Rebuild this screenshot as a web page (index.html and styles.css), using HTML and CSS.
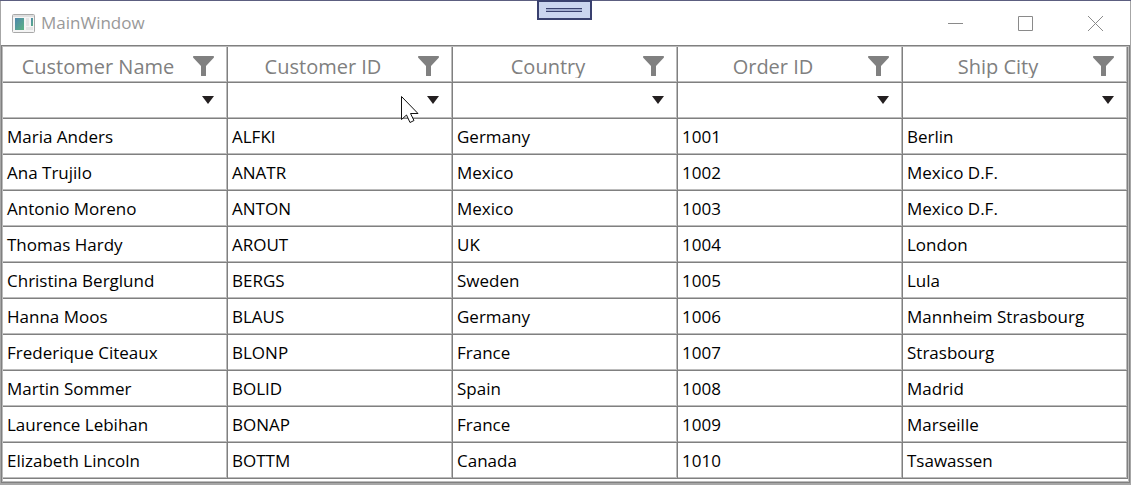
FILE: index.html
```html
<!DOCTYPE html>
<html lang="en">
<head>
<meta charset="utf-8">
<title>MainWindow</title>
<link rel="stylesheet" href="styles.css">
</head>
<body>
<svg class="symbols" aria-hidden="true">
  <symbol id="funnel" viewBox="0 0 21 20"><path d="M.5 0H20.500Q21.500 1 20.500 2L13 10V19.500Q13 20 12.500 20H8.500Q8 20 8 19.500V10L.5 2Q-.5 1 .5 0Z" fill="#808080"/></symbol>
  <symbol id="arrow" viewBox="0 0 12 8"><path d="M0 0H12L6 8Z" fill="#231f20"/></symbol>
</svg>
<div class="window">
  <header class="titlebar">
    <svg class="app-icon" width="23" height="19" viewBox="0 0 23 19">
      <defs><linearGradient id="tile" x1="0" y1="0" x2="1" y2="1"><stop offset="0" stop-color="#4d86ad"/><stop offset="1" stop-color="#5db382"/></linearGradient></defs>
      <rect x=".5" y=".5" width="22" height="18" rx="1" fill="#f5f5f5" stroke="#a8a8a8"/>
      <path d="M1 1H22V3H1Z" fill="#dedede"/>
      <rect x="3" y="4" width="9" height="12" fill="url(#tile)"/>
      <rect x="14" y="4" width="3" height="8" fill="#e4e4e4"/>
      <rect x="19" y="4" width="2" height="8" fill="url(#tile)"/>
      <rect x="14" y="13" width="7" height="3" fill="#e4e4e4"/>
    </svg>
    <h1 class="title">MainWindow</h1>
    <button class="caption" aria-label="Minimize"><svg width="15" height="15" viewBox="0 0 15 15"><path d="M0 7.500H15"/></svg></button>
    <button class="caption" aria-label="Maximize"><svg width="15" height="15" viewBox="0 0 15 15"><path d="M.5 .5H14.500V14.500H.5Z"/></svg></button>
    <button class="caption" aria-label="Close"><svg width="15" height="15" viewBox="0 0 15 15"><path d="M0 0L15 15M15 0L0 15"/></svg></button>
  </header>
  <main class="frame">
    <table class="grid">
      <thead>
        <tr class="heads">
          <th scope="col"><div class="head"><span class="label">Customer Name</span><button class="filter" aria-label="Filter Customer Name"><svg width="21" height="20"><use href="#funnel"/></svg></button></div></th>
          <th scope="col"><div class="head"><span class="label">Customer ID</span><button class="filter" aria-label="Filter Customer ID"><svg width="21" height="20"><use href="#funnel"/></svg></button></div></th>
          <th scope="col"><div class="head"><span class="label">Country</span><button class="filter" aria-label="Filter Country"><svg width="21" height="20"><use href="#funnel"/></svg></button></div></th>
          <th scope="col"><div class="head"><span class="label">Order ID</span><button class="filter" aria-label="Filter Order ID"><svg width="21" height="20"><use href="#funnel"/></svg></button></div></th>
          <th scope="col"><div class="head"><span class="label">Ship City</span><button class="filter" aria-label="Filter Ship City"><svg width="21" height="20"><use href="#funnel"/></svg></button></div></th>
        </tr>
        <tr class="filters">
          <td><div class="combo"><select aria-label="Customer Name value"><option></option></select><svg width="12" height="8"><use href="#arrow"/></svg></div></td>
          <td><div class="combo"><select aria-label="Customer ID value"><option></option></select><svg width="12" height="8"><use href="#arrow"/></svg></div></td>
          <td><div class="combo"><select aria-label="Country value"><option></option></select><svg width="12" height="8"><use href="#arrow"/></svg></div></td>
          <td><div class="combo"><select aria-label="Order ID value"><option></option></select><svg width="12" height="8"><use href="#arrow"/></svg></div></td>
          <td><div class="combo"><select aria-label="Ship City value"><option></option></select><svg width="12" height="8"><use href="#arrow"/></svg></div></td>
        </tr>
      </thead>
      <tbody>
        <tr><td>Maria Anders</td><td>ALFKI</td><td>Germany</td><td>1001</td><td>Berlin</td></tr>
        <tr><td>Ana Trujilo</td><td>ANATR</td><td>Mexico</td><td>1002</td><td>Mexico D.F.</td></tr>
        <tr><td>Antonio Moreno</td><td>ANTON</td><td>Mexico</td><td>1003</td><td>Mexico D.F.</td></tr>
        <tr><td>Thomas Hardy</td><td>AROUT</td><td>UK</td><td>1004</td><td>London</td></tr>
        <tr><td>Christina Berglund</td><td>BERGS</td><td>Sweden</td><td>1005</td><td>Lula</td></tr>
        <tr><td>Hanna Moos</td><td>BLAUS</td><td>Germany</td><td>1006</td><td>Mannheim Strasbourg</td></tr>
        <tr><td>Frederique Citeaux</td><td>BLONP</td><td>France</td><td>1007</td><td>Strasbourg</td></tr>
        <tr><td>Martin Sommer</td><td>BOLID</td><td>Spain</td><td>1008</td><td>Madrid</td></tr>
        <tr><td>Laurence Lebihan</td><td>BONAP</td><td>France</td><td>1009</td><td>Marseille</td></tr>
        <tr><td>Elizabeth Lincoln</td><td>BOTTM</td><td>Canada</td><td>1010</td><td>Tsawassen</td></tr>
      </tbody>
    </table>
  </main>
  <button class="debug-tab" aria-label="Show toolbar"><svg width="36" height="5" viewBox="0 0 36 5"><path d="M0 1H36V4H0Z" fill="#a3add0"/><path d="M0 .5H36M0 3.500H36" stroke="#39406f"/></svg></button>
  <svg class="pointer" width="18" height="28" viewBox="0 0 18 28"><path d="M.5 .5V23.500L5.500 19L9 26.500L13 24.500L9.500 17.500H17Z" fill="#fff" stroke="#111"/></svg>
</div>
</body>
</html>
```
FILE: styles.css
```css
* { box-sizing: border-box; }
body {
  margin: 0;
  background: #a6a6a6;
  font-family: "Open Sans", "Noto Sans", sans-serif;
  color: #000;
}
button, select {
  appearance: none;
  margin: 0;
  padding: 0;
  border: 0;
  background: none;
  font: inherit;
}
svg { display: block; }
.symbols { position: absolute; width: 0; height: 0; }
.window {
  position: relative;
  border-top: 1px solid #5c5e80;
}
.titlebar {
  display: flex;
  align-items: center;
  height: 44px;
  margin: 0 1px;
  padding-left: 11px;
  background: #fff;
}
.title {
  flex: 1;
  margin: 0 0 0 6px;
  font-size: 17px;
  line-height: 24px;
  font-weight: 400;
  color: #999;
}
.caption {
  display: flex;
  align-items: center;
  justify-content: center;
  width: 70px;
  height: 44px;
}
.caption path { fill: none; stroke: #8a8a8a; }
.frame {
  margin: 0 1px;
  padding-bottom: 3px;
  border: 1px solid #808080;
  outline: 1px solid #bcbcbc;
  outline-offset: -2px;
  background: #fff;
}
.grid {
  width: 100%;
  padding: 1px 1px 0;
  border-spacing: 0;
  table-layout: fixed;
}
.grid th, .grid td {
  height: 36px;
  padding: 0 0 0 4px;
  border-right: 1px solid #808080;
  border-bottom: 1px solid #808080;
  box-shadow: inset -1px -1px #bcbcbc;
  font-weight: 400;
  font-size: 17px;
  line-height: 24px;
  text-align: left;
}
.grid .heads th, .grid .filters td { padding: 0; }
.head {
  display: flex;
  align-items: center;
  padding-right: 13px;
}
.label {
  flex: 1;
  padding-top: 4px;
  overflow: hidden;
  font-size: 20px;
  line-height: 22px;
  text-align: center;
  color: #808080;
}
.filter { margin-top: 3px; }
.combo { position: relative; }
.combo select {
  display: block;
  width: 100%;
  height: 34px;
}
.combo svg {
  position: absolute;
  top: 12px;
  right: 13px;
  pointer-events: none;
}
.debug-tab {
  position: absolute;
  top: -1px;
  left: calc(50% - 29px);
  display: flex;
  align-items: center;
  justify-content: center;
  width: 55px;
  height: 20px;
  border: 2px solid #39406f;
  background: #cbd5f0;
}
.pointer {
  position: absolute;
  top: 95px;
  left: 401px;
  pointer-events: none;
}
```
